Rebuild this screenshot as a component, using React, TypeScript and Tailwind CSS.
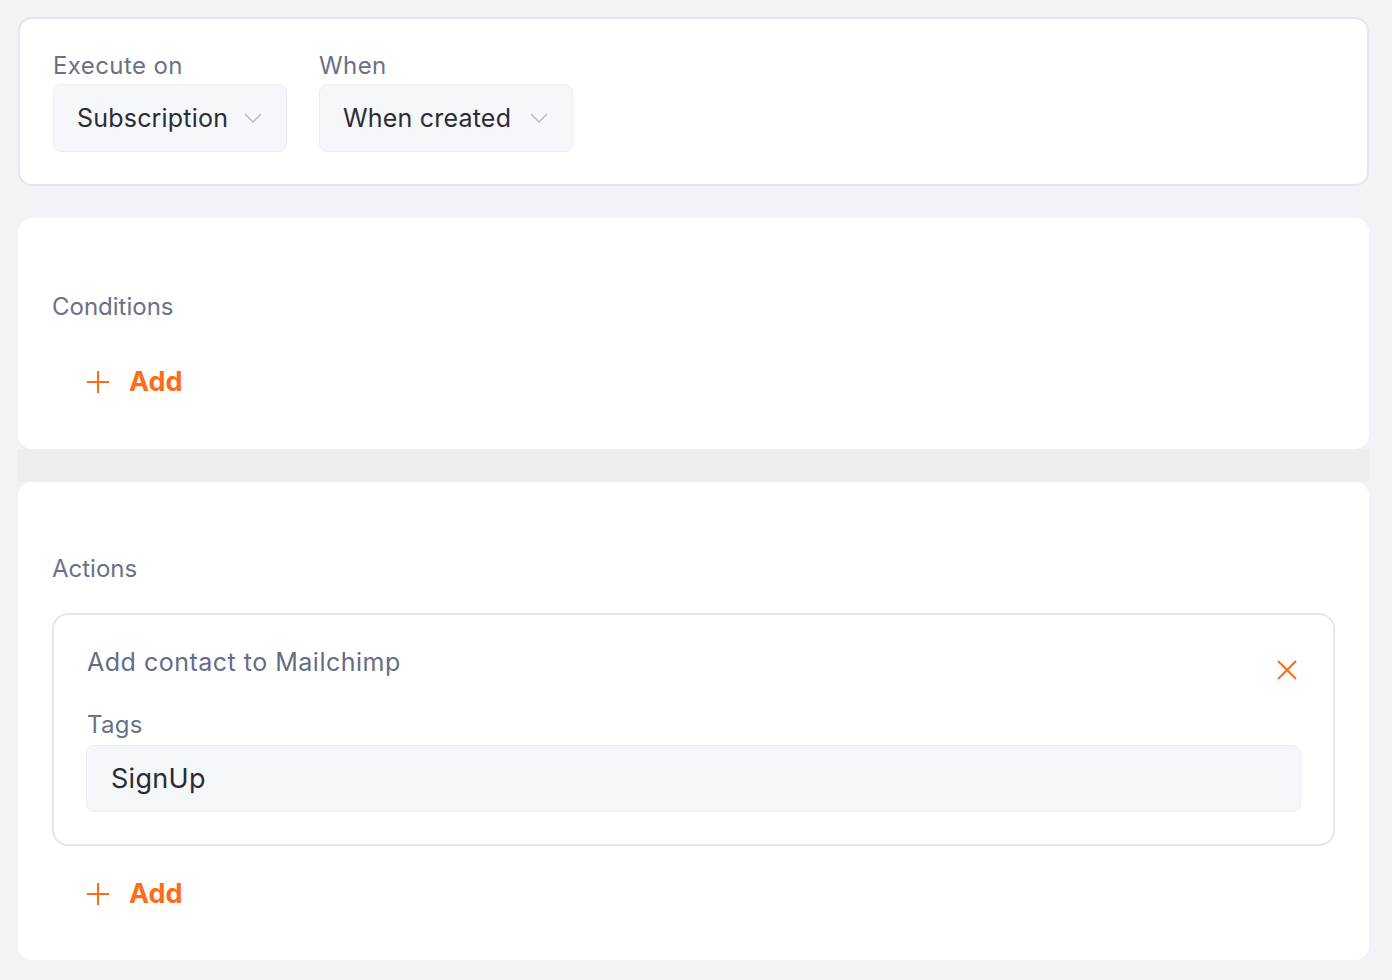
import React from "react";

const font = { fontFamily: "Inter, 'Noto Sans', sans-serif" };

function Chevron() {
  return (
    <svg width="18" height="12" viewBox="0 0 18 12" fill="none" className="shrink-0">
      <path d="M1 2 L9 10 L17 2" stroke="#b4b7c2" strokeWidth="1.3" />
    </svg>
  );
}

function Select({ value, width }: { value: string; width: string }) {
  return (
    <div
      className={`flex h-[68px] items-center justify-between rounded-[8px] border border-[#eceef3] bg-[#f6f7fa] pl-[23px] pr-[24px] ${width}`}
    >
      <span className="text-[25px] leading-none tracking-[0.2px] text-[#2b2c33]">{value}</span>
      <Chevron />
    </div>
  );
}

function Field({ label, children }: { label: string; children: React.ReactNode }) {
  return (
    <div className="flex flex-col">
      <span className="text-[24px] leading-[30px] tracking-[0.4px] text-[#6a7189]">{label}</span>
      <div className="mt-[3px]">{children}</div>
    </div>
  );
}

function AddButton() {
  return (
    <button className="flex items-center gap-[19px] pl-[34px] text-[#ff6b17]">
      <svg width="24" height="24" viewBox="0 0 24 24" fill="none">
        <path d="M12 1 V23 M1 12 H23" stroke="#ff6b17" strokeWidth="2" />
      </svg>
      <span className="text-[27px] font-bold leading-[32px]">Add</span>
    </button>
  );
}

export default function App() {
  return (
    <div style={font} className="flex h-[980px] w-[1392px] flex-col overflow-hidden bg-[#f3f3f7] pl-[18px] pr-[23px] pt-[17px]">
      {/* trigger */}
      <div className="flex h-[169px] shrink-0 gap-[32px] rounded-[14px] border-2 border-[#e5e5eb] bg-white px-[33px] pt-[32px]">
        <Field label="Execute on">
          <Select value="Subscription" width="w-[234px]" />
        </Field>
        <Field label="When">
          <Select value="When created" width="w-[254px]" />
        </Field>
      </div>

      {/* conditions */}
      <div className="mt-[32px] flex h-[231px] shrink-0 flex-col rounded-[14px] bg-white px-[34px] pt-[74px] shadow-[0_1px_2px_rgba(0,0,0,0.03)]">
        <span className="text-[24px] leading-[30px] text-[#6a7189]">Conditions</span>
        <div className="mt-[44px]">
          <AddButton />
        </div>
      </div>

      <div className="h-[33px] shrink-0 bg-[#ececf1]" />

      {/* actions */}
      <div className="flex h-[478px] shrink-0 flex-col rounded-[14px] bg-white px-[34px] pt-[72px]">
        <span className="text-[24px] leading-[30px] text-[#6a7189]">Actions</span>
        <div className="mt-[29px] rounded-[16px] border-2 border-[#e5e5eb] px-[32px] pb-[32px] pt-[32px]">
          <div className="flex items-start justify-between">
            <span className="pl-px text-[25px] leading-[30px] tracking-[0.5px] text-[#646c86]">Add contact to Mailchimp</span>
            <svg width="20" height="20" viewBox="0 0 20 20" fill="none" className="mr-[4px] mt-[13px]">
              <path d="M1 1 L19 19 M19 1 L1 19" stroke="#ff6b17" strokeWidth="2" />
            </svg>
          </div>
          <div className="mt-[30px] flex flex-col">
            <span className="pl-px text-[24px] leading-[30px] tracking-[0.3px] text-[#6a7189]">Tags</span>
            <div className="mt-[5px] flex h-[67px] items-center rounded-[8px] border border-[#eceef3] bg-[#f6f7fa] pl-[24px]">
              <span className="text-[27px] leading-none tracking-[0.3px] text-[#2b2c33]">SignUp</span>
            </div>
          </div>
        </div>
        <div className="mt-[32px]">
          <AddButton />
        </div>
      </div>
    </div>
  );
}
